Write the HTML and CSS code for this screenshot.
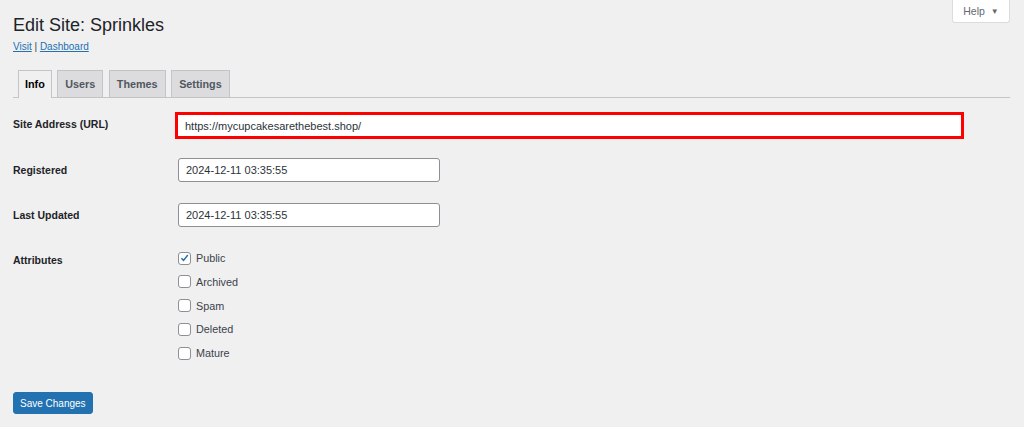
FILE: index.html
```html
<!DOCTYPE html>
<html lang="en">
<head>
  <meta charset="UTF-8">
  <title>Edit Site: Sprinkles</title>
  <link rel="stylesheet" href="styles.css">
</head>
<body>
  <div class="help-wrap">
    <button class="help">Help <span class="arrow">&#9660;</span></button>
  </div>

  <div class="wrap">
    <h1>Edit Site: Sprinkles</h1>
    <p class="links"><a href="#">Visit</a> | <a href="#">Dashboard</a></p>

    <nav class="tabs">
      <a class="tab active" href="#">Info</a>
      <a class="tab" href="#">Users</a>
      <a class="tab" href="#">Themes</a>
      <a class="tab" href="#">Settings</a>
    </nav>

    <form class="form">
      <div class="row row-url">
        <label class="label">Site Address (URL)</label>
        <div class="field">
          <input class="input input-url" type="text" value="https://mycupcakesarethebest.shop/">
        </div>
      </div>
      <div class="row">
        <label class="label">Registered</label>
        <div class="field">
          <input class="input" type="text" value="2024-12-11 03:35:55">
        </div>
      </div>
      <div class="row">
        <label class="label">Last Updated</label>
        <div class="field">
          <input class="input" type="text" value="2024-12-11 03:35:55">
        </div>
      </div>
      <div class="row row-attr">
        <span class="label">Attributes</span>
        <div class="field checks">
          <label class="check"><span class="box checked"><svg viewBox="0 0 12 12" width="12" height="12"><path d="M2.6 6.2 L5 8.6 L9.6 2.8" fill="none" stroke="#2271b1" stroke-width="1.6"/></svg></span>Public</label>
          <label class="check"><span class="box"></span>Archived</label>
          <label class="check"><span class="box"></span>Spam</label>
          <label class="check"><span class="box"></span>Deleted</label>
          <label class="check"><span class="box"></span>Mature</label>
        </div>
      </div>

      <button class="save" type="button">Save Changes</button>
    </form>
  </div>
</body>
</html>
```

FILE: styles.css
```css
html, body {
  margin: 0;
  padding: 0;
}

body {
  background: #f0f0f1;
  color: #3c434a;
  font-family: "Liberation Sans", Arial, sans-serif;
  font-size: 10.5px;
  width: 1024px;
  height: 427px;
  overflow: hidden;
  position: relative;
}

.help-wrap {
  position: absolute;
  top: 0;
  right: 14px;
}

.help {
  width: 58px;
  height: 23px;
  background: #fff;
  border: 1px solid #dcdcde;
  border-top: none;
  border-radius: 0 0 3px 3px;
  color: #646970;
  font-family: inherit;
  font-size: 10.5px;
  padding: 0;
}

.help .arrow {
  font-size: 8px;
  margin-left: 3px;
  vertical-align: 1px;
}

.wrap {
  padding: 13px 14px 0 13px;
}

h1 {
  margin: 0;
  font-size: 18px;
  font-weight: 400;
  color: #1d2327;
  line-height: 24px;
}

.links {
  margin: 3px 0 0;
  line-height: 14px;
  font-size: 10px;
}

.links a {
  color: #2271b1;
}

.tabs {
  display: flex;
  gap: 5px;
  margin-top: 16px;
  padding-left: 5px;
  border-bottom: 1px solid #c3c4c7;
  height: 27px;
}

.tab {
  display: block;
  height: 26px;
  line-height: 26px;
  padding: 0 7px;
  background: #dcdcde;
  border: 1px solid #c3c4c7;
  border-bottom: none;
  color: #50575e;
  font-weight: 700;
  font-size: 10.8px;
  text-decoration: none;
}

.tab.active {
  background: #f0f0f1;
  color: #000;
  height: 27px;
  margin-bottom: -1px;
  padding: 0 6px;
}

.tab + .tab {
  margin-left: 0.5px;
}

.form {
  margin-top: 14px;
}

.row {
  display: flex;
  align-items: flex-start;
  margin-bottom: 21px;
}

.label {
  width: 165px;
  font-weight: 700;
  color: #1d2327;
  line-height: 24px;
  font-size: 10.5px;
}

.input {
  box-sizing: border-box;
  width: 262px;
  height: 24px;
  border: 1px solid #8c8f94;
  border-radius: 3px;
  background: #fff;
  padding: 0 7px;
  color: #2c3338;
  font-family: inherit;
  font-size: 11px;
}

.row-url .field {
  margin-left: -3px;
}

.input-url {
  width: 789px;
  height: 27px;
  border: 3px solid #ff0000;
  border-radius: 0;
  padding: 0 7px;
}

.row-url {
  margin-bottom: 19px;
}

.row-attr .label {
  line-height: 14px;
  margin-top: 5px;
}

.checks {
  display: flex;
  flex-direction: column;
  gap: 9.75px;
  padding-top: 3px;
}

.check {
  display: flex;
  align-items: center;
  gap: 5px;
  height: 14px;
  font-size: 10.8px;
  color: #3c434a;
}

.box {
  box-sizing: border-box;
  width: 13px;
  height: 13px;
  border: 1px solid #8c8f94;
  border-radius: 3px;
  background: #fff;
  display: flex;
  align-items: center;
  justify-content: center;
}

.save {
  margin-top: 11px;
  height: 22px;
  padding: 0 6px;
  background: #2271b1;
  border: 1px solid #2271b1;
  border-radius: 3px;
  color: #fff;
  font-family: inherit;
  font-size: 10px;
}
```
